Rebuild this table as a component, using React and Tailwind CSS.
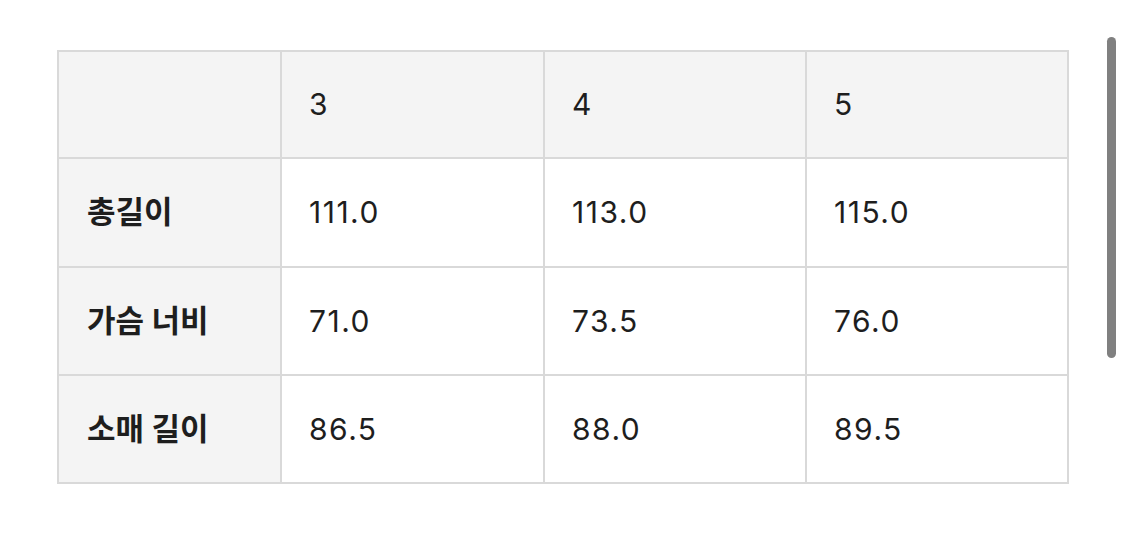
export default function App() {
  const header = ["", "3", "4", "5"];
  const rows = [
    ["총길이", "111.0", "113.0", "115.0"],
    ["가슴 너비", "71.0", "73.5", "76.0"],
    ["소매 길이", "86.5", "88.0", "89.5"],
  ];
  const font = { fontFamily: 'Inter, "Noto Sans CJK KR", sans-serif' };
  return (
    <div className="relative w-[1125px] h-[550px] bg-white overflow-hidden" style={font}>
      <div className="pt-[50px] pl-[57px]">
        <div className="grid w-[1012px] grid-cols-[221px_261px_260px_260px] grid-rows-[105px_107px_106px_106px] gap-[2px] p-[2px] bg-[#d9d9d9]">
          {header.map((h, i) => (
            <div key={"h" + i} className="bg-[#f4f4f4] flex items-center pl-[27px] text-[30px] tracking-[1.5px] text-[#1e1e1e]">
              {h}
            </div>
          ))}
          {rows.map((r, ri) =>
            r.map((c, ci) => (
              <div
                key={ri + "-" + ci}
                className={
                  ci === 0
                    ? "bg-[#f4f4f4] flex items-center pl-[28px] text-[31px] font-bold text-[#1e1e1e]"
                    : "bg-white flex items-center pl-[27px] text-[30px] text-[#1e1e1e] tracking-[1.5px]"
                }
              >
                {c}
              </div>
            ))
          )}
        </div>
      </div>
      <div className="absolute left-[1107px] top-[37px] w-[9px] h-[321px] rounded-full bg-[#808080]" />
    </div>
  );
}
